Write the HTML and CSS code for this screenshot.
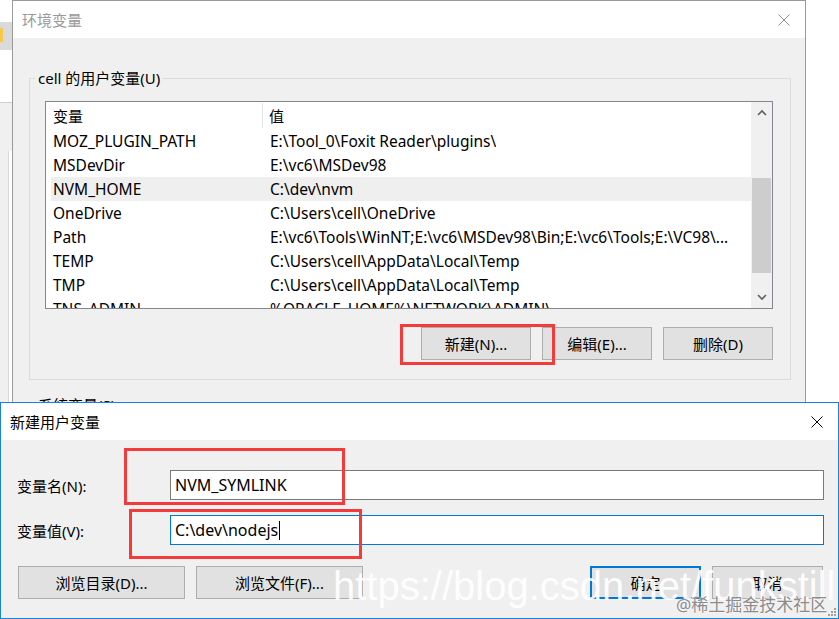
FILE: index.html
```html
<!DOCTYPE html>
<html lang="zh-CN">
<head>
    <meta charset="UTF-8">
    <title>环境变量</title>
    <link rel="stylesheet" href="styles.css">
</head>
<body>
<div class="desktop">

    <!-- window behind, only its right edge shows -->
    <div class="back-window">
        <div class="back-band"><span class="back-icon"></span></div>
        <div class="back-pane"><div class="back-inner"></div></div>
    </div>

    <div class="env-window">
        <div class="titlebar">
            <span class="title">环境变量</span>
            <svg class="close-icon" width="12" height="12" viewBox="0 0 12 12">
                <path d="M0.5 0.5 L11.5 11.5 M11.5 0.5 L0.5 11.5" stroke="#8a8a8a" stroke-width="1" fill="none"/>
            </svg>
        </div>
        <div class="env-body">
            <fieldset class="group">
                <legend>cell 的用户变量(U)</legend>
                <div class="listview">
                    <div class="list-main">
                        <div class="list-header">
                            <div class="col-name">变量</div>
                            <div class="col-value">值</div>
                        </div>
                        <div class="list-rows">
                            <div class="row"><span class="name">MOZ_PLUGIN_PATH</span><span class="value">E:\Tool_0\Foxit Reader\plugins\</span></div>
                            <div class="row"><span class="name">MSDevDir</span><span class="value">E:\vc6\MSDev98</span></div>
                            <div class="row selected"><span class="name">NVM_HOME</span><span class="value">C:\dev\nvm</span></div>
                            <div class="row"><span class="name">OneDrive</span><span class="value">C:\Users\cell\OneDrive</span></div>
                            <div class="row"><span class="name">Path</span><span class="value">E:\vc6\Tools\WinNT;E:\vc6\MSDev98\Bin;E:\vc6\Tools;E:\VC98\...</span></div>
                            <div class="row"><span class="name">TEMP</span><span class="value">C:\Users\cell\AppData\Local\Temp</span></div>
                            <div class="row"><span class="name">TMP</span><span class="value">C:\Users\cell\AppData\Local\Temp</span></div>
                            <div class="row"><span class="name">TNS_ADMIN</span><span class="value">%ORACLE_HOME%\NETWORK\ADMIN\</span></div>
                        </div>
                    </div>
                    <div class="scrollbar">
                        <div class="scroll-btn">
                            <svg width="10" height="7" viewBox="0 0 10 7"><path d="M1 6 L5 2 L9 6" stroke="#606060" stroke-width="1.6" fill="none"/></svg>
                        </div>
                        <div class="scroll-track"><div class="scroll-thumb"></div></div>
                        <div class="scroll-btn">
                            <svg width="10" height="7" viewBox="0 0 10 7"><path d="M1 1 L5 5 L9 1" stroke="#606060" stroke-width="1.6" fill="none"/></svg>
                        </div>
                    </div>
                </div>
                <div class="button-row">
                    <button class="btn">新建(N)...</button>
                    <button class="btn">编辑(E)...</button>
                    <button class="btn">删除(D)</button>
                </div>
            </fieldset>
            <fieldset class="group group-system">
                <legend>系统变量(S)</legend>
            </fieldset>
        </div>
    </div>

    <div class="dialog">
        <div class="titlebar">
            <span class="title">新建用户变量</span>
            <svg class="close-icon" width="12" height="12" viewBox="0 0 12 12">
                <path d="M0.5 0.5 L11.5 11.5 M11.5 0.5 L0.5 11.5" stroke="#000" stroke-width="1" fill="none"/>
            </svg>
        </div>
        <div class="dialog-body">
            <div class="field">
                <span class="field-label">变量名(N):</span>
                <div class="textbox">NVM_SYMLINK</div>
            </div>
            <div class="field">
                <span class="field-label">变量值(V):</span>
                <div class="textbox focused">C:\dev\nodejs<span class="caret"></span></div>
            </div>
            <div class="dialog-buttons">
                <button class="btn btn-wide">浏览目录(D)...</button>
                <button class="btn btn-wide">浏览文件(F)...</button>
                <span class="spacer"></span>
                <button class="btn btn-small btn-default">确定</button>
                <button class="btn btn-small">取消</button>
            </div>
        </div>
    </div>

    <!-- red annotation boxes -->
    <div class="mark mark-new"></div>
    <div class="mark mark-name"></div>
    <div class="mark mark-value"></div>

    <div class="watermark">https://blog.csdn.net/funkstill</div>
    <div class="watermark-site">@稀土掘金技术社区</div>
    <svg class="grip" width="9" height="9" viewBox="0 0 9 9">
        <rect x="6" y="0" width="2" height="2" fill="#a0a0a0"/>
        <rect x="3" y="3" width="2" height="2" fill="#a0a0a0"/>
        <rect x="6" y="3" width="2" height="2" fill="#a0a0a0"/>
        <rect x="0" y="6" width="2" height="2" fill="#a0a0a0"/>
        <rect x="3" y="6" width="2" height="2" fill="#a0a0a0"/>
        <rect x="6" y="6" width="2" height="2" fill="#a0a0a0"/>
    </svg>
</div>
</body>
</html>
```

FILE: styles.css
```css
* {
    box-sizing: border-box;
}
body {
    margin: 0;
    width: 839px;
    height: 619px;
    overflow: hidden;
    background: #fff;
    font-family: "Noto Sans", "Noto Sans CJK SC", sans-serif;
    font-size: 15px;
    color: #000;
}
.desktop {
    position: relative;
    width: 839px;
    height: 619px;
    overflow: hidden;
}

/* window in the back */
.back-window {
    position: absolute;
    left: 0;
    top: 0;
    width: 12px;
    height: 619px;
    display: flex;
    flex-direction: column;
    background: #fff;
}
.back-band {
    margin-top: 22px;
    height: 28px;
    background: #dadada;
    padding-top: 6px;
}
.back-icon {
    display: block;
    width: 3px;
    height: 14px;
    background: #f8c848;
}
.back-pane {
    margin-top: 52px;
    flex: 1;
    background: #f0f0f0;
    border-top: 1px solid #cfcfcf;
    padding: 48px 0 0 8px;
}
.back-inner {
    height: 100%;
    background: #fff;
    border-left: 1px solid #d9d9d9;
}

/* windows */
.titlebar {
    height: 37px;
    flex-shrink: 0;
    background: #fff;
    display: flex;
    align-items: center;
    justify-content: space-between;
    padding: 0 15px 0 9px;
}
.env-window {
    position: absolute;
    left: 12px;
    top: 0;
    width: 794px;
    height: 660px;
    border: 1px solid #9a9a9a;
    background: #f0f0f0;
    display: flex;
    flex-direction: column;
}
.env-window .title {
    color: #999;
}
.env-body {
    padding: 0 14px 0 16px;
}
.group {
    margin: 30px 0 0;
    padding: 13px 17px 19px 15px;
    border: 1px solid #dcdcdc;
    min-width: 0;
}
.group legend {
    padding: 0 3px;
    margin-left: -10px;
    line-height: 20px;
}
.group-system {
    margin-top: 15px;
    height: 80px;
}

/* list view */
.listview {
    height: 208px;
    border: 1px solid #828790;
    background: #fff;
    display: flex;
}
.list-main {
    flex: 1;
    min-width: 0;
    display: flex;
    flex-direction: column;
    overflow: hidden;
}
.list-header {
    height: 27px;
    flex-shrink: 0;
    display: flex;
    align-items: center;
}
.list-header .col-name {
    width: 217px;
    height: 25px;
    padding-left: 7px;
    border-right: 1px solid #e5e5e5;
    display: flex;
    align-items: center;
}
.list-header .col-value {
    padding-left: 6px;
}
.list-rows {
    flex: 1;
    margin-left: 5px;
    overflow: hidden;
    font-size: 15.5px;
}
.row {
    height: 24px;
    display: flex;
    align-items: center;
    white-space: nowrap;
}
.row.selected {
    background: #efefef;
}
.row .name {
    width: 219px;
    flex-shrink: 0;
    padding-left: 2px;
}
.row .value {
    overflow: hidden;
}
.scrollbar {
    width: 21px;
    background: #f0f0f0;
    display: flex;
    flex-direction: column;
}
.scroll-btn {
    height: 21px;
    display: flex;
    align-items: center;
    justify-content: center;
}
.scroll-track {
    flex: 1;
    padding: 55px 1px 0;
}
.scroll-thumb {
    height: 95px;
    background: #cdcdcd;
}

/* buttons */
.button-row {
    display: flex;
    justify-content: flex-end;
    gap: 11px;
    margin-top: 18px;
}
.btn {
    height: 33px;
    width: 110px;
    padding: 0;
    background: #e1e1e1;
    border: 1px solid #adadad;
    font: inherit;
    color: #000;
}

/* new variable dialog */
.dialog {
    position: absolute;
    left: 0;
    top: 402px;
    width: 839px;
    height: 217px;
    border: 1px solid #1883d7;
    background: #f0f0f0;
    display: flex;
    flex-direction: column;
}
.dialog-body {
    padding: 30px 14px 0 16px;
    display: flex;
    flex-direction: column;
}
.field {
    display: flex;
    align-items: center;
}
.field + .field {
    margin-top: 15px;
}
.field-label {
    width: 153px;
}
.textbox {
    flex: 1;
    height: 30px;
    border: 1px solid #7a7a7a;
    background: #fff;
    display: flex;
    align-items: center;
    padding-left: 4px;
    font-size: 16px;
}
.textbox.focused {
    border-color: #0078d7;
}
.caret {
    width: 1px;
    height: 19px;
    margin-left: 1px;
    background: #000;
}
.dialog-buttons {
    display: flex;
    gap: 11px;
    margin-top: 21px;
    padding: 0 1px;
}
.btn-wide {
    width: 167px;
}
.btn-small {
    width: 111px;
}
.btn-default {
    border: 2px solid #0078d7;
}
.spacer {
    flex: 1;
}

/* annotations */
.mark {
    position: absolute;
    border: 3px solid #f43b3b;
}
.mark-new {
    left: 400px;
    top: 324px;
    width: 155px;
    height: 41px;
}
.mark-name {
    left: 124px;
    top: 448px;
    width: 221px;
    height: 57px;
}
.mark-value {
    left: 129px;
    top: 509px;
    width: 233px;
    height: 50px;
}

/* watermark */
.watermark {
    position: absolute;
    left: 333px;
    top: 566px;
    font-family: "Liberation Sans", Arial, sans-serif;
    font-size: 40px;
    line-height: 40px;
    color: rgba(255, 255, 255, 0.92);
    white-space: nowrap;
}
.watermark-site {
    position: absolute;
    left: 676px;
    top: 594px;
    font-size: 17px;
    line-height: 22px;
    color: #8c8c8c;
    text-shadow: 0 0 2px #fff;
    white-space: nowrap;
}
.grip {
    position: absolute;
    left: 828px;
    top: 608px;
}
```
